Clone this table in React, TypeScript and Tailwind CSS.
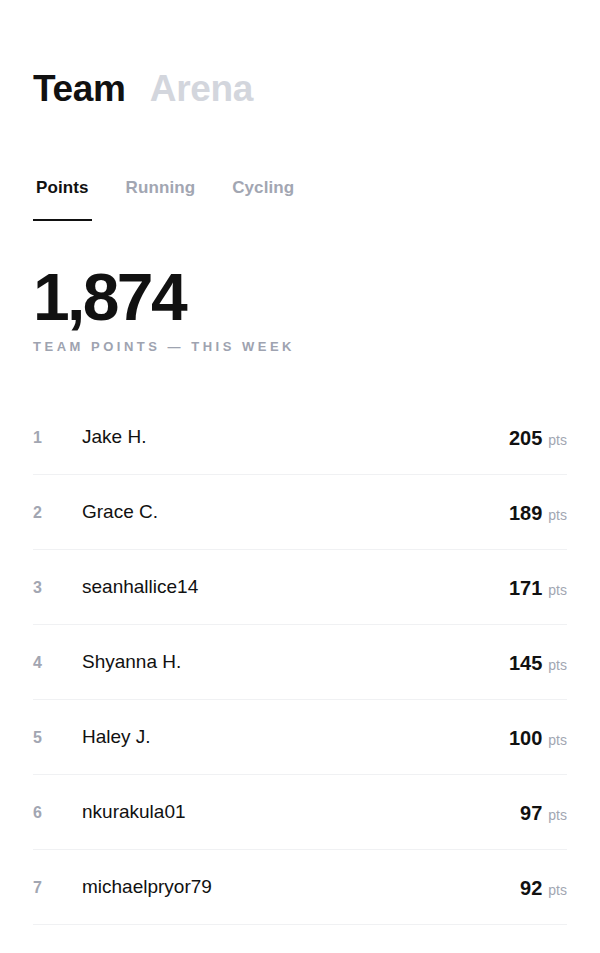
import clsx from "clsx";

const tabs = ["Points", "Running", "Cycling"];

const members = [
  { rank: 1, name: "Jake H.", pts: 205 },
  { rank: 2, name: "Grace C.", pts: 189 },
  { rank: 3, name: "seanhallice14", pts: 171 },
  { rank: 4, name: "Shyanna H.", pts: 145 },
  { rank: 5, name: "Haley J.", pts: 100 },
  { rank: 6, name: "nkurakula01", pts: 97 },
  { rank: 7, name: "michaelpryor79", pts: 92 },
];

export default function App() {
  return (
    <div className="min-h-screen bg-white px-[33px] pt-[70px] font-['Liberation_Sans',Arial,sans-serif] text-[#111111]">
      <h1 className="flex gap-[24px] text-[37px] font-bold leading-none tracking-[-0.3px]">
        <span>Team</span>
        <span className="text-[#d3d6dd]">Arena</span>
      </h1>

      <div className="mt-[69px] flex gap-[31px]">
        {tabs.map((tab, i) => (
          <button
            key={tab}
            className={clsx(
              "border-b-2 px-[3px] pb-[19px] text-[17px] font-bold leading-[24px] tracking-[0.1px]",
              i === 0 ? "border-[#111111] text-[#111111]" : "border-transparent text-[#a2a6b2]",
            )}
          >
            {tab}
          </button>
        ))}
      </div>

      <div className="mt-[43px] text-[66px] font-bold leading-none tracking-[-0.04em]">1,874</div>
      <div className="mt-[9px] text-[13px] font-bold uppercase leading-[16px] tracking-[0.27em] text-[#9ea3b0]">
        Team points — this week
      </div>

      <div className="mt-[45px]">
        {members.map((m) => (
          <div key={m.rank} className="flex h-[75px] items-center border-b border-[#f0f1f3]">
            <span className="w-[49px] pt-[1px] text-[16px] font-bold text-[#a2a6b2]">{m.rank}</span>
            <span className="flex-1 pt-[1px] text-[19px]">{m.name}</span>
            <span className="flex items-baseline pt-[1px]">
              <span className="text-[20px] font-bold">{m.pts}</span>
              <span className="ml-[6px] text-[14px] text-[#a2a6b2]">pts</span>
            </span>
          </div>
        ))}
      </div>
    </div>
  );
}
